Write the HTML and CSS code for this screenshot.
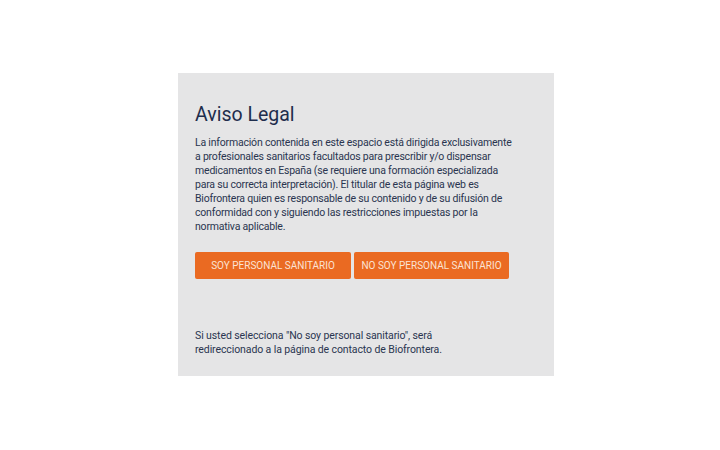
FILE: index.html
```html
<!DOCTYPE html>
<html lang="es">
<head>
<meta charset="utf-8">
<link rel="stylesheet" href="styles.css">
</head>
<body>
<div class="page">
  <div class="modal">
    <h1 class="title">Aviso Legal</h1>
    <p class="text">La información contenida en este espacio está dirigida exclusivamente a profesionales sanitarios facultados para prescribir y/o dispensar medicamentos en España (se requiere una formación especializada para su correcta interpretación). El titular de esta página web es Biofrontera quien es responsable de su contenido y de su difusión de conformidad con y siguiendo las restricciones impuestas por la normativa aplicable.</p>
    <div class="buttons">
      <button class="btn btn-a">SOY PERSONAL SANITARIO</button>
      <button class="btn btn-b">NO SOY PERSONAL SANITARIO</button>
    </div>
    <p class="note">Si usted selecciona "No soy personal sanitario", será redireccionado a la página de contacto de Biofrontera.</p>
  </div>
</div>
</body>
</html>
```
FILE: styles.css
```css
html, body {
  margin: 0;
  padding: 0;
  background: #ffffff;
}
.page {
  width: 720px;
  height: 450px;
  padding-top: 73px;
  box-sizing: border-box;
  display: flex;
  justify-content: flex-start;
}
.modal {
  margin-left: 178px;
  width: 376px;
  height: 303px;
  box-sizing: border-box;
  background: #e5e5e6;
  padding: 28px 17px 0 17px;
  font-family: Roboto, "Liberation Sans", sans-serif;
  color: #2a3550;
}
.title {
  margin: 0;
  font-size: 19.5px;
  font-weight: 400;
  line-height: 27px;
  color: #1e2d4d;
}
.text {
  margin: 8px 0 0 0;
  font-size: 10.5px;
  letter-spacing: -0.2px;
  line-height: 14px;
  width: 318px;
}
.buttons {
  display: flex;
  gap: 3px;
  margin-top: 18px;
}
.btn {
  height: 27px;
  border: none;
  border-radius: 2px;
  background: #ea6a22;
  color: #fbe3d4;
  font-family: Roboto, "Liberation Sans", sans-serif;
  font-size: 10px;
  padding: 0;
}
.btn-a { width: 156px; }
.btn-b { width: 155px; }
.note {
  margin: 50px 0 0 0;
  font-size: 10.5px;
  letter-spacing: -0.1px;
  line-height: 14px;
  width: 250px;
}
```
